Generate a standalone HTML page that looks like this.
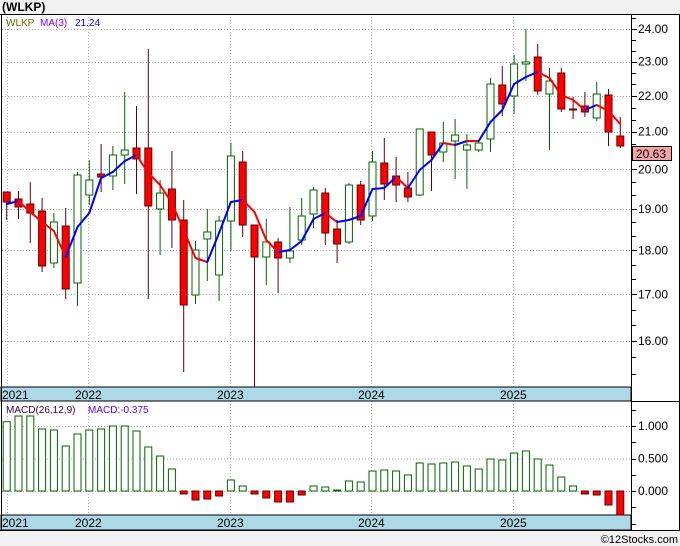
<!DOCTYPE html>
<html><head><meta charset="utf-8"><style>
html,body{margin:0;padding:0;background:#fff;}
svg{display:block;font-family:"Liberation Sans","DejaVu Sans",sans-serif;}
</style></head><body>
<svg id="s" width="680" height="546" xmlns="http://www.w3.org/2000/svg"></svg>
<script>
var C=[
[192,202,192,220,1],[199,207,191,219,1],[204,213,182,243,1],[211,266,198,272,1],[222,263,213,268,0],
[226,289,208,299,1],[175,283,172,306,0],[180,195,160,205,0],[174,177,144,192,1],[155,176,146,190,0],
[150,155,92,184,0],[148,159,106,194,1],[148,206,49,299,1],[193,209,180,255,0],[189,220,151,248,1],
[220,305,200,372,1],[250,295,241,304,0],[232,239,209,281,0],[221,275,216,301,0],[156,221,143,251,0],
[162,225,151,237,1],[225,257,225,387,1],[242,257,219,285,0],[242,258,238,293,1],[251,258,207,263,0],
[216,240,198,245,0],[190,214,187,228,0],[193,233,188,245,1],[229,244,220,263,1],[185,242,183,244,0],
[185,220,181,225,1],[162,216,151,221,0],[163,184,138,200,1],[176,185,157,202,1],[188,197,172,202,1],
[129,195,129,196,0],[132,155,132,191,1],[143,152,122,162,0],[135,141,119,179,0],[145,150,134,189,0],
[143,150,140,152,0],[84,139,78,152,0],[85,104,66,116,1],[64,96,55,114,0],[62,64,29,81,0],
[57,91,44,95,1],[81,94,68,150,0],[73,109,68,112,1],[109,110,97,119,1],[106,112,92,117,1],
[94,118,82,121,0],[95,132,89,146,1],[136,146,117,148,1]];
var MA=[204,201,212,222,231,257,227,213,178,172,161,155,173,185,203,230,258,262,233,202,200,212,240,252,250,241,219,213,222,220,216,189,188,177,188,170,160,143,145,141,141,122,110,84,77,72,78,95,100,110,105,111,124];
var M=[421.7,416,416,429,430,446,434,430,429,426,426,431,447,456,469,494,500,499,496,480,486,494,498,502,502,495,486,487,490,481,482,471,470,471,475,463,464,463,462,466,469,459,460,453,451,459,465,477,486,494,495,505,515];
var h='';
function X(i){return 6.7+11.8*i;}
function py(p){return 2474.5-769.5*Math.log(p);}
// backgrounds
h+='<rect x="0" y="0" width="680" height="14" fill="#f2f2f2"/>';
h+='<rect x="0" y="530" width="680" height="16" fill="#f2f2f2"/>';
h+='<text x="2" y="11" font-size="12" font-weight="bold" fill="#000">(WLKP)</text>';
h+='<text x="678" y="543" font-size="11" text-anchor="end" fill="#000">©12Stocks.com</text>';
// grid
var g='stroke="#aaa" stroke-width="1" stroke-dasharray="1,2"';
for(var p=16;p<=24;p++){var y=Math.round(py(p))+.5;h+='<line x1="2" y1="'+y+'" x2="631" y2="'+y+'" '+g+'/>';}
[426,458.5,491].forEach(function(y){h+='<line x1="2" y1="'+(y+.5)+'" x2="631" y2="'+(y+.5)+'" '+g+'/>';});
[6.7,88,230,371,513].forEach(function(x){x=Math.round(x)+.5;h+='<line x1="'+x+'" y1="14" x2="'+x+'" y2="387" '+g+'/><line x1="'+x+'" y1="401" x2="'+x+'" y2="515" '+g+'/>';});
// bands
h+='<rect x="1" y="387" width="630" height="14" fill="#add8e6" stroke="#000" stroke-width="1"/>';
h+='<rect x="1" y="515" width="630" height="15" fill="#add8e6" stroke="#000" stroke-width="1"/>';
[['2021',2],['2022',75],['2023',217],['2024',358],['2025',500]].forEach(function(a){
h+='<text x="'+a[1]+'" y="399" font-size="12" fill="#000">'+a[0]+'</text><text x="'+a[1]+'" y="527" font-size="12" fill="#000">'+a[0]+'</text>';});
// candles
C.forEach(function(c,i){var x=X(i),r=c[4];var wc=r?'#600':'#060';
h+='<line x1="'+x+'" y1="'+c[2]+'" x2="'+x+'" y2="'+c[3]+'" stroke="'+wc+'" stroke-width="1"/>';
h+='<rect x="'+(x-3.5)+'" y="'+c[0]+'" width="7" height="'+Math.max(1,c[1]-c[0])+'" fill="'+(r?'#f00':'#fff')+'" stroke="'+wc+'" stroke-width="1"/>';});
// MA
for(var i=0;i<MA.length-1;i++){var col=MA[i+1]<MA[i]?'#00f':'#f00';
h+='<line x1="'+X(i)+'" y1="'+MA[i]+'" x2="'+X(i+1)+'" y2="'+MA[i+1]+'" stroke="'+col+'" stroke-width="2" stroke-linecap="round"/>';}
// MACD
M.forEach(function(v,i){var x=X(i);var z=491;
if(v<z){h+='<rect x="'+(x-3.5)+'" y="'+v+'" width="7" height="'+(z-v)+'" fill="#fff" stroke="#060"/>';}
else{h+='<rect x="'+(x-3.5)+'" y="'+z+'" width="7" height="'+Math.max(1,v-z)+'" fill="#f00" stroke="#600"/>';}});
// borders
h+='<line x1="0" y1="14.5" x2="680" y2="14.5" stroke="#000"/>';
h+='<line x1="1.5" y1="14" x2="1.5" y2="530" stroke="#000"/>';
h+='<line x1="631.5" y1="14" x2="631.5" y2="530" stroke="#000"/>';
h+='<line x1="631" y1="401.5" x2="680" y2="401.5" stroke="#000"/>';
h+='<line x1="679.5" y1="14" x2="679.5" y2="530" stroke="#000"/>';
h+='<line x1="0" y1="530.5" x2="680" y2="530.5" stroke="#000"/>';
// right axis ticks/labels
for(var p=15;p<=24;p++){for(var k=0;k<3;k++){var y=py(p+k/3);if(y<16||y>386)continue;y=Math.round(y)+.5;
h+='<line x1="632" y1="'+y+'" x2="'+(k==0?637:636)+'" y2="'+y+'" stroke="#000"/>';}
if(p>=16){h+='<text x="638" y="'+(py(p)+4)+'" font-size="12" fill="#000">'+p+'.00</text>';}}
for(var v=-0.5;v<=1.25;v+=0.25){var y=491-65*v;if(y<403||y>529)continue;y=Math.round(y)+.5;h+='<line x1="632" y1="'+y+'" x2="636" y2="'+y+'" stroke="#000"/>';}
[['1.000',426],['0.500',458.5],['0.000',491]].forEach(function(a){h+='<text x="638" y="'+(a[1]+4)+'" font-size="12" fill="#000">'+a[0]+'</text>';});
// price tag
h+='<rect x="632.5" y="146.5" width="39" height="14" fill="#f4a4a4" stroke="#000"/><text x="636" y="158" font-size="12" fill="#000">20.63</text>';
// legends
h+='<text x="6" y="26" font-size="10" fill="#666600">WLKP</text><text x="40" y="26" font-size="10" fill="#8000ff">MA(3)</text><text x="75" y="26" font-size="10" fill="#0000ff">21.24</text>';
h+='<text x="6" y="413" font-size="10" fill="#400040">MACD(26,12,9)</text><text x="88" y="413" font-size="10" fill="#6000ff">MACD:-0.375</text>';
document.getElementById('s').innerHTML=h;
</script>
</body></html>
